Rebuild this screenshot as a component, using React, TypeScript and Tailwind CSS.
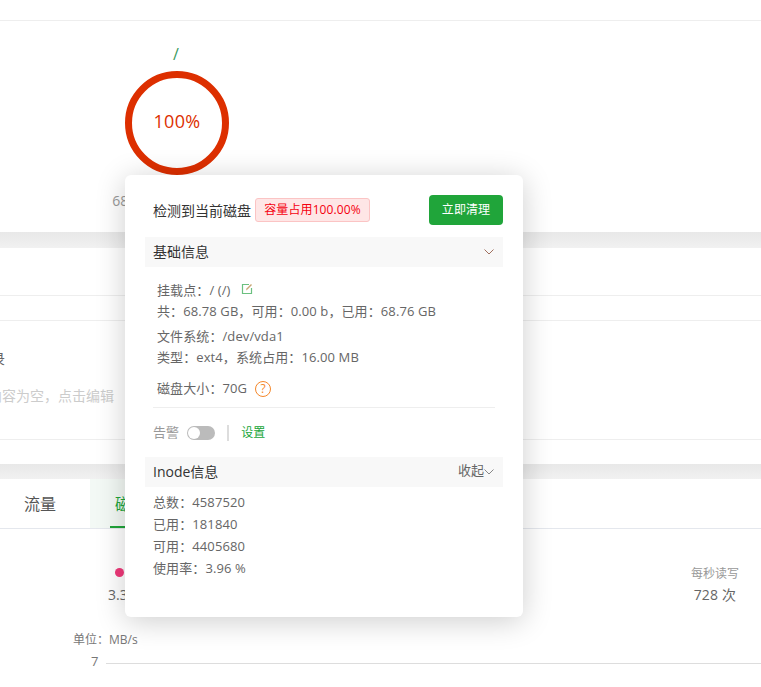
import React from 'react';

const Chevron = ({ className }: { className: string }) => (
  <svg className={className} viewBox="0 0 10 6" fill="none" stroke="currentColor" strokeWidth={1}>
    <path d="M0.5 0.5 L5 5 L9.5 0.5" />
  </svg>
);

const Band = ({ className }: { className: string }) => (
  <div className={`${className} bg-gradient-to-b from-[#e8e8e8] to-[#f1f1f1]`} />
);

const DiskPopover = () => (
  <div className="absolute left-[125px] top-[175px] w-[398px] h-[442px] bg-white rounded-[6px] shadow-[0_4px_30px_rgba(0,0,0,0.2)] px-5 pt-5 text-[13px] text-[#666] tracking-[0.1px]">
    <div className="flex items-center h-[30px]">
      <span className="ml-2 pt-px text-[14px] tracking-normal text-[#333]">检测到当前磁盘</span>
      <span className="ml-1 h-6 w-[115px] flex items-center justify-center rounded-[3px] border border-[#fbc4c4] bg-[#fee6e6] text-[12px] text-[#f5000f]">容量占用100.00%</span>
      <button className="ml-auto w-[74px] h-[30px] rounded-[4px] bg-[#20a53a] text-white text-[12px]">立即清理</button>
    </div>

    <div className="mt-3 h-[30px] bg-[#f8f8f8] flex items-center justify-between pl-2 pr-[9px] pb-[2px] text-[14px] tracking-normal text-[#333]">
      <span>基础信息</span>
      <Chevron className="mt-[2px] w-[10px] h-[6px] text-[#a0705f]" />
    </div>

    <div className="pl-3 pt-[13px] leading-[21px]">
      <div className="flex items-center">
        <span>挂载点：/ (/)</span>
        <svg className="ml-[11px] mb-[3px] w-3 h-3" viewBox="0 0 12 12" fill="none">
          <path d="M8 1.5H1.5V10.5H10.5V5" stroke="#6cc080" strokeWidth={1.2} />
          <path d="M5 7.5L5.5 5.5L10 1L11 2L6.5 6.5Z" fill="#c9a878" />
        </svg>
      </div>
      <div>共：68.78 GB，可用：0.00 b，已用：68.76 GB</div>
      <div className="mt-1">文件系统：/dev/vda1</div>
      <div>类型：ext4，系统占用：16.00 MB</div>
      <div className="mt-[10px] flex items-center">
        <span>磁盘大小：70G</span>
        <span className="ml-2 w-4 h-4 rounded-full border border-[#f5872a] text-[#f5872a] text-[12px] leading-none flex items-center justify-center">?</span>
      </div>
    </div>

    <div className="mx-2 mt-[8px] border-t border-[#eee]" />

    <div className="ml-2 mt-[17px] h-4 flex items-center text-[#999]">
      <span>告警</span>
      <span className="ml-2 w-7 h-[14px] rounded-full bg-[#bbb] flex items-center pl-px">
        <span className="w-3 h-3 rounded-full bg-white" />
      </span>
      <span className="ml-3 w-[2px] h-4 bg-[#ddd]" />
      <span className="ml-3 text-[12px] text-[#20a53a]">设置</span>
    </div>

    <div className="mt-4 h-[30px] bg-[#f8f8f8] flex items-center justify-between pl-2 pr-[9px] pb-[2px] text-[14px] tracking-normal text-[#333]">
      <span>Inode信息</span>
      <span className="flex items-center text-[13px] text-[#666]">
        收起
        <Chevron className="mt-[2px] w-[10px] h-[6px] text-[#888]" />
      </span>
    </div>

    <div className="pl-2 pt-1 leading-[22px]">
      <div>总数：4587520</div>
      <div>已用：181840</div>
      <div>可用：4405680</div>
      <div>使用率：3.96 %</div>
    </div>
  </div>
);

export default function App() {
  return (
    <div
      className="relative h-[687px] overflow-hidden bg-[#f0f0f0] flex flex-col"
      style={{ fontFamily: '"Open Sans", "Noto Sans CJK SC", sans-serif' }}
    >
      {/* disk usage panel */}
      <div className="h-[232px] bg-white">
        <div className="h-[21px] border-b border-[#eee]" />
        <div className="ml-[96px] w-[160px] flex flex-col items-center">
          <div className="mt-[23px] h-[20px] leading-[20px] text-[16px] text-[#3a9a60]">/</div>
        </div>
        <div className="ml-[97px] w-[160px] flex flex-col items-center">
          <div className="mt-[7px] w-[104px] h-[104px] rounded-full border-[7px] border-[#dd2f00] flex items-center justify-center pb-[4px] text-[18px] tracking-[0.3px] text-[#dd2f00]">100%</div>
          <div className="mt-[15px] text-[14px] text-[#999]">68.76 GB / 68.78 GB</div>
        </div>
      </div>
      <Band className="h-4" />

      {/* memo panel */}
      <div className="h-[216px] bg-white flex flex-col">
        <div className="h-[48px] border-b border-[#eee]" />
        <div className="h-[25px] border-b border-[#eee]" />
        <div className="h-[119px] border-b border-[#eee] text-[14px]">
          <div className="mt-[27px] -ml-[23px] text-[#666]">记录</div>
          <div className="mt-4 -ml-[12px] text-[#ccc]">内容为空，点击编辑</div>
        </div>
      </div>
      <Band className="h-[15px]" />

      {/* tabs panel */}
      <div className="flex-1 bg-white">
        <div className="h-[50px] border-b border-[#e4e7ed] flex">
          <div className="w-[90px] pl-6 flex items-center text-[16px] text-[#555]">流量</div>
          <div className="relative w-[100px] bg-[#f3f9f5] pl-[25px] flex items-center text-[16px] text-[#20a53a]">
            磁盘IO
            <span className="absolute left-5 bottom-0 w-[60px] h-[2px] bg-[#20a53a]" />
          </div>
        </div>

        <div className="h-[83px] flex justify-between">
          <div className="ml-[108px] mt-[39px]">
            <span className="ml-[7px] block w-[9px] h-[9px] rounded-full bg-[#f0397a]" />
            <div className="mt-[7px] text-[14px] text-[#666]">3.39 MB/s</div>
          </div>
          <div className="mr-[22px] mt-[37px] text-center">
            <div className="text-[12px] leading-[16px] text-[#999]">每秒读写</div>
            <div className="mt-[3px] text-[14px] leading-[20px] tracking-[0.2px] text-[#666]">728 次</div>
          </div>
        </div>

        <div className="ml-[73px] mt-[20px] text-[12px] leading-[16px] text-[#777]">单位：MB/s</div>
        <div className="ml-[91px] mt-[5px] flex items-center">
          <span className="text-[13px] leading-[16px] text-[#777]">7</span>
          <span className="ml-[8px] mt-[4px] flex-1 border-t border-[#ddd]" />
        </div>
      </div>

      <DiskPopover />
    </div>
  );
}
